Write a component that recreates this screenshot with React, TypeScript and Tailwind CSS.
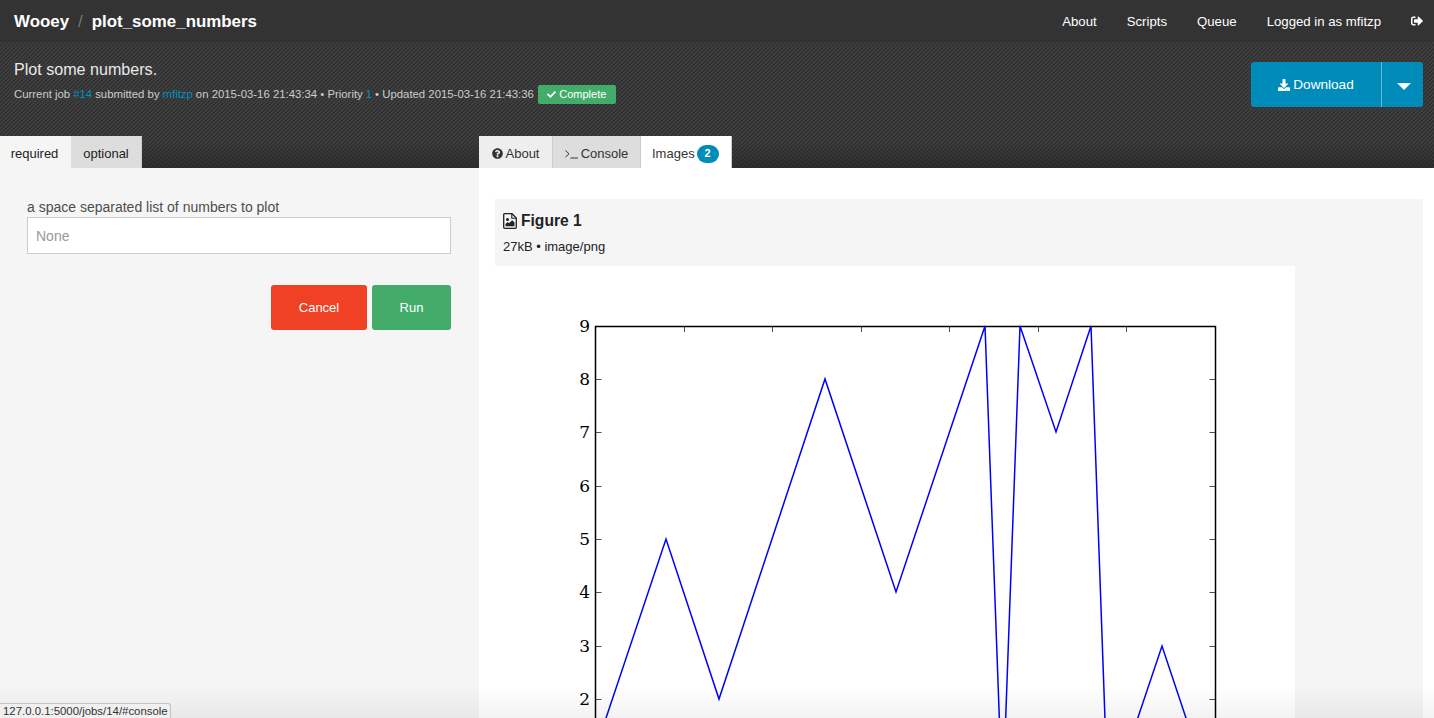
import { FaCheck, FaDownload, FaQuestionCircle, FaSignOutAlt } from "react-icons/fa";

const font = "font-['Liberation_Sans',Arial,sans-serif]";
const heroBackground =
  "linear-gradient(to bottom, rgba(0,0,0,0) 78%, rgba(0,0,0,0.22) 100%), repeating-linear-gradient(135deg, #323232 0px, #323232 1.4142px, #3f3f3f 1.4142px, #3f3f3f 2.8284px)";

function Terminal() {
  return (
    <svg width="14" height="10" viewBox="0 0 14 10" fill="none" stroke="#333" strokeWidth="1">
      <path d="M0.5 1.5 4 4.8 0.5 8" />
      <path d="M5.5 9H13" />
    </svg>
  );
}

function FileImage() {
  return (
    <svg width="14" height="16" viewBox="0 0 14 16" fill="none">
      <path d="M1.5 0.7H9L13.3 5V14.3A1 1 0 0 1 12.3 15.3H1.7A1 1 0 0 1 0.7 14.3V1.5A0.8 0.8 0 0 1 1.5 0.7Z" stroke="#222" strokeWidth="1.3" />
      <path d="M8.8 1V5.2H13" stroke="#222" strokeWidth="1.1" />
      <circle cx="4.5" cy="6.6" r="1.5" fill="#222" />
      <path d="M2.5 13.2V11L4.6 9 6 10.3 9.2 7.2 11.5 9.6V13.2Z" fill="#222" />
    </svg>
  );
}

function Chart() {
  const points = "600,736 666,539 719,699 825,379 896,592 985,326 1002.5,805 1020,326 1056,432 1091,326 1110,860 1126,753 1162,646 1195,745";
  const ys = [[9, 326], [8, 379], [7, 432], [6, 486], [5, 539], [4, 592], [3, 646], [2, 699]] as const;
  return (
    <svg className="block" width="800" height="452" viewBox="495 266 800 452">
      <rect x="595.5" y="326.5" width="620" height="500" fill="#fff" stroke="#000" strokeWidth="1.5" />
      {[684.5, 772.5, 861.5, 949.5, 1038.5, 1126.5].map((x) => (
        <path key={x} d={`M${x} 326V332`} stroke="#222" strokeWidth="0.8" />
      ))}
      {ys.slice(1).map(([, y]) => (
        <path key={y} d={`M595.5 ${y + 0.5}H601.5M1209.5 ${y + 0.5}H1215.5`} stroke="#222" strokeWidth="0.8" />
      ))}
      <polyline points={points} fill="none" stroke="#0000ff" strokeWidth="1.5" strokeLinejoin="miter" />
      {ys.map(([n, y]) => (
        <text key={n} x="590" y={y + 5.5} textAnchor="end" fontSize="17" fill="#000" fontFamily="'DejaVu Serif',serif">
          {n}
        </text>
      ))}
    </svg>
  );
}

export default function App() {
  return (
    <div className={`relative h-[718px] w-[1434px] overflow-hidden bg-white ${font}`}>
      <nav className="flex h-[42px] items-center justify-between bg-[#333] pl-[14px] pr-[11px] pt-[1px] text-white">
        <div className="flex items-center text-[16.9px] font-bold">
          <span>Wooey</span>
          <span className="mx-[9px] font-normal text-[#777]">/</span>
          <span>plot_some_numbers</span>
        </div>
        <div className="flex items-center gap-[30px] text-[13.2px]">
          <span>About</span>
          <span>Scripts</span>
          <span>Queue</span>
          <span>Logged in as mfitzp</span>
          <FaSignOutAlt className="text-[12px]" />
        </div>
      </nav>

      <header className="flex h-[126px] flex-col justify-between" style={{ backgroundImage: heroBackground }}>
        <div className="flex justify-between pl-[14px] pr-[11px] pt-[20px]">
          <div>
            <h1 className="text-[16.1px] leading-[14px] text-[#e8e8e8]">Plot some numbers.</h1>
            <div className="mt-[9px] flex items-center text-[11.37px] text-[#ccc]">
              <span>Current job</span>
              <span className="ml-[3px] text-[#0090c0]">#14</span>
              <span className="ml-[3px]">submitted by</span>
              <span className="ml-[3px] text-[#0090c0]">mfitzp</span>
              <span className="ml-[3px]">on 2015-03-16 21:43:34 • Priority</span>
              <span className="ml-[3px] text-[#0090c0]">1</span>
              <span className="ml-[3px]">• Updated 2015-03-16 21:43:36</span>
              <span className="ml-[4px] flex h-[19px] w-[78px] items-center justify-center gap-[3px] rounded-[2px] bg-[#43ac6a] text-[11px] text-white">
                <FaCheck className="text-[9px]" />
                Complete
              </span>
            </div>
          </div>
          <div className="flex h-[45px] w-[172px] overflow-hidden rounded-[3px] bg-[#008cba] text-white">
            <div className="flex w-[130px] items-center justify-center gap-[3px] pt-[1px] text-[13.6px]">
              <FaDownload className="text-[12px]" />
              Download
            </div>
            <div className="flex flex-1 items-center justify-center border-l border-[#66bad6] pl-[2px]">
              <span className="mt-[3px] h-0 w-0 border-x-[7px] border-t-[7px] border-x-transparent border-t-white" />
            </div>
          </div>
        </div>

        <div className="flex text-[13px] text-[#222]">
          <div className="flex w-[479px]">
            <div className="flex h-[32px] w-[71px] items-center justify-center bg-[#f5f5f5] pr-[2px] pt-[3px]">required</div>
            <div className="flex h-[32px] w-[71px] items-center justify-center border-r border-[#ccc] bg-[#ddd] pt-[3px]">optional</div>
          </div>
          <div className="flex text-[#333]">
            <div className="flex h-[32px] w-[74px] items-center justify-center gap-[3px] border-r border-[#ccc] bg-[#eee] pt-[3px]">
              <FaQuestionCircle className="text-[11px]" />
              About
            </div>
            <div className="flex h-[32px] w-[87px] items-center justify-center gap-[2px] bg-[#ddd] pt-[3px]">
              <Terminal />
              Console
            </div>
            <div className="flex h-[32px] w-[92px] items-center gap-[2px] border-x border-[#ccc] bg-white pl-[11px] pt-[3px]">
              Images
              <span className="flex h-[18px] w-[22px] items-center justify-center rounded-full bg-[#008cba] text-[11px] font-bold text-white">2</span>
            </div>
          </div>
        </div>
      </header>

      <main className="flex h-[550px]">
        <section className="w-[479px] bg-[#f5f5f5] pl-[27px] pr-[28px] pt-[30px]">
          <label className="block text-[14px] leading-[19px] text-[#4d4d4d]">a space separated list of numbers to plot</label>
          <div className="flex h-[37px] items-center border border-[#ccc] bg-white pl-[8px] pt-[2px] text-[14px] text-[#999]">None</div>
          <div className="mt-[31px] flex justify-end gap-[5px] text-[13px] text-white">
            <div className="flex h-[45px] w-[96px] items-center justify-center rounded-[3px] bg-[#f04124]">Cancel</div>
            <div className="flex h-[45px] w-[79px] items-center justify-center rounded-[3px] bg-[#43ac6a]">Run</div>
          </div>
        </section>
        <section className="flex-1 pl-[16px] pr-[11px] pt-[31px]">
          <div className="h-[67px] bg-[#f5f5f5] pl-[8px] pt-[12px]">
            <h2 className="flex items-center gap-[4px] text-[15.6px] font-bold leading-[20px] text-[#222]">
              <FileImage />
              Figure 1
            </h2>
            <p className="mt-[8px] text-[13px] leading-[16px] text-[#222]">27kB • image/png</p>
          </div>
          <div className="flex bg-[#f5f5f5]">
            <div className="h-[452px] w-[800px] shrink-0 bg-white">
              <Chart />
            </div>
          </div>
        </section>
      </main>

      <div className="pointer-events-none absolute inset-x-0 bottom-0 h-[32px] bg-gradient-to-b from-transparent to-[#0000000d]" />
      <div className="absolute bottom-0 left-0 flex h-[15px] w-[171px] items-center rounded-tr-[3px] border-r border-t border-[#c4c4c4] bg-[#f0f0f0] pl-[3px] pt-[1px] text-[11.4px] text-[#333]">
        127.0.0.1:5000/jobs/14/#console
      </div>
    </div>
  );
}
